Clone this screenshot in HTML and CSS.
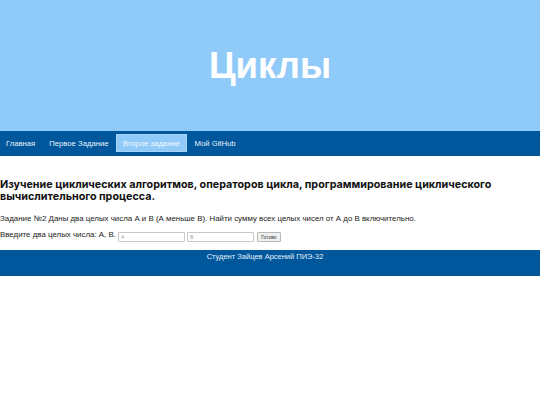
FILE: index.html
```html
<!DOCTYPE html>
<html lang="ru">
<head>
<meta charset="utf-8">
<title>Циклы</title>
<link rel="stylesheet" href="styles.css">
</head>
<body>
<header class="hero">
  <h1 class="hero-title">Циклы</h1>
</header>
<nav class="menu">
  <a class="menu-link" href="#">Главная</a>
  <a class="menu-link" href="#">Первое Задание</a>
  <a class="menu-link menu-link--active" href="#">Второе задание</a>
  <a class="menu-link" href="#">Мой GitHub</a>
</nav>
<main class="content">
  <h2 class="content-title">Изучение циклических алгоритмов, операторов цикла, программирование циклического вычислительного процесса.</h2>
  <p class="task">Задание №2 Даны два целых числа А и В (А меньше В). Найти сумму всех целых чисел от А до В включительно.</p>
  <form class="task-form">
    <span class="task-label">Введите два целых числа: А, В.</span>
    <input class="task-input" type="text" placeholder="A">
    <input class="task-input task-input--b" type="text" placeholder="B">
    <button class="task-button" type="button">Готово</button>
  </form>
</main>
<footer class="footer">Студент Зайцев Арсений ПИЭ-32</footer>
</body>
</html>
```
FILE: styles.css
```css
html, body {
  margin: 0;
  padding: 0;
  background: #ffffff;
}
body {
  font-family: "Liberation Sans", Arial, sans-serif;
  color: #222;
}
.hero {
  height: 131px;
  background: #90caf9;
  display: flex;
  align-items: center;
  justify-content: center;
}
.hero-title {
  margin: 0;
  font-family: "Liberation Sans", Arial, sans-serif;
  font-weight: 700;
  font-size: 36.5px;
  line-height: 40px;
  color: #ffffff;
}
.menu {
  height: 25px;
  box-sizing: border-box;
  padding: 3px 0 4px 0;
  background: #01579b;
  display: flex;
  align-items: stretch;
}
.menu-link {
  display: flex;
  align-items: center;
  padding: 0 6px;
  border: 1px solid transparent;
  font-size: 7.7px;
  color: #e8f3fd;
  text-decoration: none;
}
.menu-link:first-child {
  padding-left: 5px;
}
.menu-link--active {
  background: #90caf9;
  border-color: #a9d5fb;
  color: #f4f9ff;
  padding: 0 6.5px;
}
.content {
  padding: 23px 0 0 0;
}
.content-title {
  margin: 0;
  font-family: Inter, "Liberation Sans", sans-serif;
  font-weight: 700;
  font-size: 10.75px;
  line-height: 12px;
  color: #111;
}
.task {
  margin: 11px 0 0 0;
  font-size: 7.9px;
  line-height: 9px;
  color: #222;
}
.task-form {
  margin: 7px 0 0 0;
  display: flex;
  align-items: flex-start;
  height: 11px;
}
.task-label {
  font-size: 7.9px;
  line-height: 9px;
  color: #222;
}
.task-input {
  box-sizing: border-box;
  width: 67px;
  height: 10px;
  margin: 2px 0 0 2px;
  padding: 0 2px;
  border: 1px solid #c8c8c8;
  border-radius: 1px;
  font-family: "Liberation Sans", Arial, sans-serif;
  font-size: 5px;
  background: #fff;
  outline: none;
}
.task-input::placeholder {
  color: #a0a0a0;
}
.task-input--b {
  margin-left: 2px;
}
.task-button {
  box-sizing: border-box;
  width: 24px;
  height: 10px;
  margin: 2px 0 0 3px;
  padding: 0;
  border: 1px solid #b8b8b8;
  border-radius: 1px;
  background: #f0f0f0;
  font-family: "Liberation Sans", Arial, sans-serif;
  font-size: 5px;
  color: #333;
}
.footer {
  margin-top: 9px;
  height: 26px;
  box-sizing: border-box;
  padding: 2px 10px 0 0;
  background: #01579b;
  color: #e3f2fd;
  font-size: 7.5px;
  line-height: 9px;
  text-align: center;
}
```
